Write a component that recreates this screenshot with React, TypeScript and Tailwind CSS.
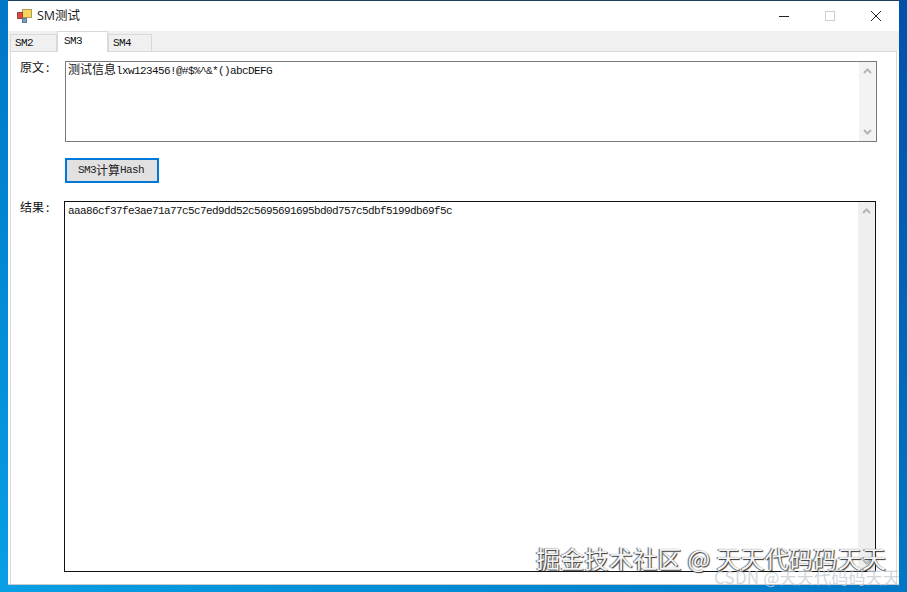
const latin = "[font-family:'Liberation_Mono',monospace] text-[11px] tracking-[-0.6px]";
const cjk = "[font-family:'Noto_Sans_CJK_SC',sans-serif] text-[12px]";

function Chevron({ up }: { up?: boolean }) {
  return (
    <svg width="9" height="6" viewBox="0 0 9 6" fill="none" stroke="#b4b4b4" strokeWidth="2">
      <path d={up ? 'M1 5l3.5-3.5L8 5' : 'M1 1l3.5 3.5L8 1'} />
    </svg>
  );
}

function Scrollbar({ dark }: { dark?: boolean }) {
  return (
    <div className={`flex w-[17px] flex-col items-center justify-between py-[6px] ${dark ? 'bg-[#efefef]' : 'bg-[#f3f3f3]'}`}>
      <Chevron up />
      <Chevron />
    </div>
  );
}

function AppIcon() {
  return (
    <svg width="15" height="14" viewBox="0 0 15 14">
      <rect x="5.5" y="0.5" width="9" height="8" fill="#f6d55c" stroke="#b09a55" />
      <rect x="0.5" y="3.5" width="5" height="6" fill="#e2463c" stroke="#8c4a44" />
      <rect x="5.5" y="9.5" width="4" height="4" fill="#7d9cc4" stroke="#5f7694" />
    </svg>
  );
}

export default function App() {
  const tabs = [
    { name: 'SM2', width: 'w-[47px]' },
    { name: 'SM3', width: 'w-[51px]', active: true },
    { name: 'SM4', width: 'w-[44px]' },
  ];

  return (
    <div className="relative h-[592px] w-[907px] overflow-hidden bg-gradient-to-bl from-[#0350a8] to-[#0a9fe4]">
      {/* Window */}
      <div className="ml-[8px] flex h-[585px] w-[891px] flex-col border-t border-t-[#1d3f5c] border-b border-b-[#c9c9c9] bg-white">
        {/* Title bar */}
        <div className="flex h-[30px] items-center">
          <div className="ml-[9px]">
            <AppIcon />
          </div>
          <span className="ml-[5px] text-[12.5px] text-[#222] [font-family:'Open_Sans','Noto_Sans_CJK_SC',sans-serif]">SM测试</span>
          <div className="ml-auto flex items-center">
            <svg width="12" height="12" viewBox="0 0 12 12" className="mr-[34px]">
              <path d="M1 6.5h10" stroke="#222" strokeWidth="1" />
            </svg>
            <svg width="12" height="12" viewBox="0 0 12 12" className="mr-[34px]">
              <rect x="1.5" y="1.5" width="9" height="9" fill="none" stroke="#cfcfcf" />
            </svg>
            <svg width="12" height="12" viewBox="0 0 12 12" className="mr-[17px]">
              <path d="M1 1l10 10M11 1L1 11" stroke="#222" strokeWidth="1" />
            </svg>
          </div>
        </div>

        {/* Tab strip */}
        <div className="flex h-[20px] items-end bg-[#f0f0f0] pl-[2px]">
          {tabs.map((tab) => (
            <div
              key={tab.name}
              className={`flex items-center border border-b-0 border-[#d9d9d9] ${tab.width} ${
                tab.active
                  ? 'relative z-10 -mb-px h-[21px] bg-white pb-[1px] pl-[6px]'
                  : 'h-[17px] bg-[#f0f0f0] pl-[4px] pt-[1px]'
              }`}
            >
              <span className={`text-[#111] ${latin}`}>{tab.name}</span>
            </div>
          ))}
        </div>

        {/* Page */}
        <div className="mx-[2px] flex flex-1 flex-col border-x border-t border-[#d9d9d9] pl-[9px]">
          <div className="mt-[9px] flex">
            <div className={`w-[45px] leading-[12px] text-[#111] ${cjk}`}>原文<span className="ml-[2px]">:</span></div>
            <div className="flex h-[81px] w-[812px] justify-between border border-[#7a7a7a] pl-[2px]">
              <div className="leading-[12px] text-[#111]">
                <span className={cjk}>测试信息</span>
                <span className={latin}>lxw123456!@#$%^&amp;*()abcDEFG</span>
              </div>
              <Scrollbar />
            </div>
          </div>

          <button className="ml-[45px] mt-[16px] flex h-[25px] w-[94px] items-center justify-center border-2 border-[#0078d7] bg-[#e1e1e1] pb-[1px] pr-[2px] leading-[14px] text-[#222]">
            <span className={latin}>SM3</span>
            <span className={cjk}>计算</span>
            <span className={latin}>Hash</span>
          </button>

          <div className="mt-[18px] flex">
            <div className={`w-[44px] leading-[12px] text-[#111] ${cjk}`}>结果<span className="ml-[2px]">:</span></div>
            <div className="flex h-[371px] w-[812px] justify-between border border-[#111] pl-[3px]">
              <div className={`pt-[2px] leading-[14px] text-[#111] ${latin}`}>
                aaa86cf37fe3ae71a77c5c7ed9dd52c5695691695bd0d757c5dbf5199db69f5c
              </div>
              <Scrollbar dark />
            </div>
          </div>
        </div>
      </div>

      {/* Watermarks */}
      <div className="absolute left-[536px] top-[543px] text-[24px] leading-[30px] tracking-[0.3px] whitespace-nowrap text-[#f4f4f4] [font-family:'Noto_Sans_CJK_SC',sans-serif] [text-shadow:1px_1px_1px_#333,-1px_0_1px_#555]">
        掘金技术社区 @ 天天代码码天天
      </div>
      <div className="absolute left-[714px] top-[567px] text-[17px] leading-[20px] tracking-[0.2px] whitespace-nowrap text-[#c4ccd6]/80 [font-family:'Noto_Sans_CJK_SC',sans-serif]">
        CSDN @天天代码码天天
      </div>
    </div>
  );
}
